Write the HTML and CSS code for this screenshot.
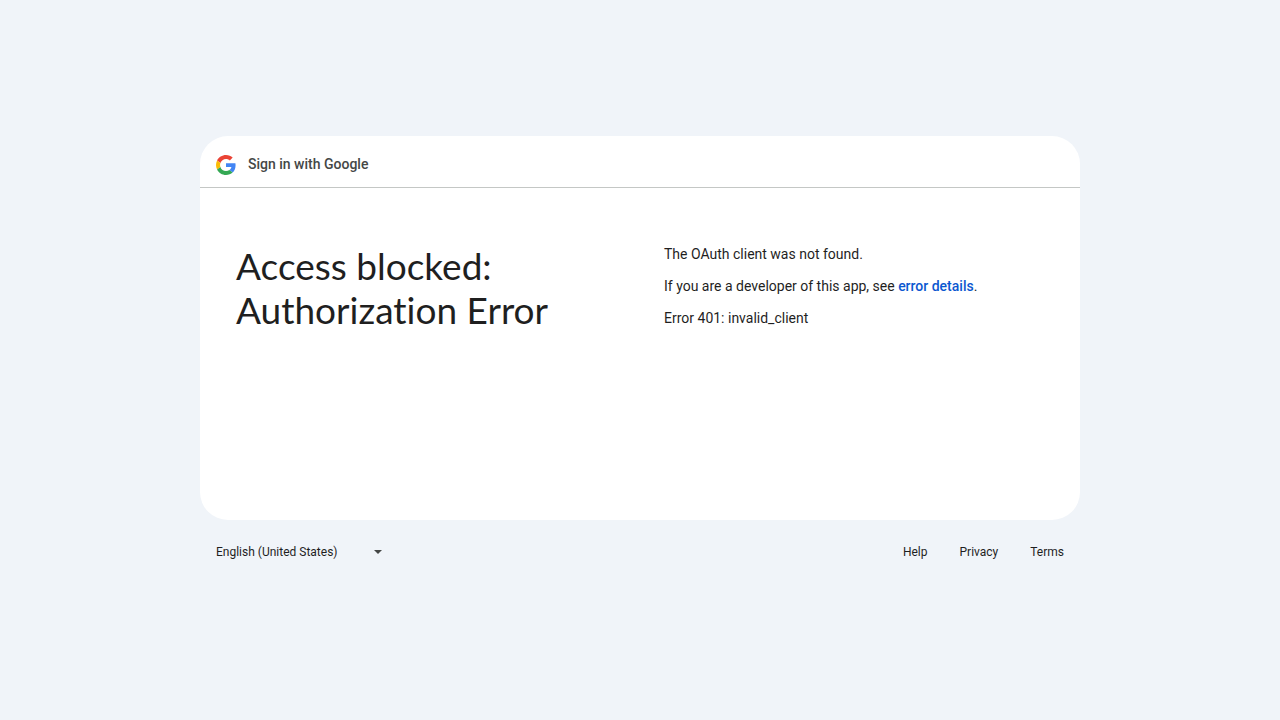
FILE: index.html
```html
<!DOCTYPE html>
<html lang="en">
<head>
<meta charset="utf-8">
<meta name="viewport" content="width=device-width, initial-scale=1">
<title>Error 401: invalid_client</title>
<link rel="stylesheet" href="styles.css">
</head>
<body class="page">
<div class="shell">
  <main class="card">
    <header class="card-header">
      <svg class="logo" viewBox="0 0 48 48" aria-hidden="true">
        <path fill="#EA4335" d="M24 9.5c3.54 0 6.71 1.22 9.21 3.6l6.85-6.85C35.9 2.38 30.47 0 24 0 14.62 0 6.51 5.38 2.56 13.22l7.98 6.19C12.43 13.72 17.74 9.5 24 9.5z"/>
        <path fill="#4285F4" d="M46.98 24.55c0-1.57-.15-3.09-.38-4.55H24v9.02h12.94c-.58 2.96-2.26 5.48-4.78 7.18l7.73 6c4.51-4.18 7.09-10.36 7.09-17.65z"/>
        <path fill="#FBBC05" d="M10.53 28.59c-.48-1.45-.76-2.99-.76-4.59s.27-3.14.76-4.59l-7.98-6.19C.92 16.46 0 20.12 0 24c0 3.88.92 7.54 2.56 10.78l7.97-6.19z"/>
        <path fill="#34A853" d="M24 48c6.48 0 11.93-2.13 15.89-5.81l-7.73-6c-2.15 1.45-4.92 2.3-8.16 2.3-6.26 0-11.57-4.22-13.47-9.91l-7.98 6.19C6.51 42.62 14.62 48 24 48z"/>
      </svg>
      <span class="brand">Sign in with Google</span>
    </header>
    <div class="content">
      <h1 class="title">Access blocked: Authorization Error</h1>
      <section class="details">
        <p class="text">The OAuth client was not found.</p>
        <p class="text">If you are a developer of this app, see <a class="link" href="#details">error details</a>.</p>
        <p class="text">Error 401: invalid_client</p>
      </section>
    </div>
  </main>
  <footer class="footer">
    <div class="language">
      <select class="language-select" aria-label="Language">
        <option>English (United States)</option>
      </select>
      <svg class="arrow" viewBox="0 0 8 4" aria-hidden="true"><path fill="#444746" d="M0 0h8L4 4z"/></svg>
    </div>
    <nav class="footer-links">
      <a class="footer-link" href="#help">Help</a>
      <a class="footer-link" href="#privacy">Privacy</a>
      <a class="footer-link" href="#terms">Terms</a>
    </nav>
  </footer>
</div>
</body>
</html>
```
FILE: styles.css
```css
* { box-sizing: border-box; }
.page {
  margin: 0;
  min-height: 100vh;
  display: flex;
  align-items: center;
  justify-content: center;
  background: #f0f4f9;
  color: #1f1f1f;
  font-family: "Google Sans", Roboto, sans-serif;
  font-size: 14px;
  line-height: 20px;
}
.shell { width: 100%; max-width: 880px; }
.card {
  min-height: 384px;
  background: #fff;
  border-radius: 28px;
}
.card-header {
  display: flex;
  align-items: flex-end;
  gap: 12px;
  padding: 17px 16px 12px;
  border-bottom: 1px solid #c4c7c5;
}
.logo { width: 20px; height: 20px; }
.brand {
  color: #444746;
  font-size: 14px;
  font-weight: 500;
  line-height: 22px;
}
.content {
  display: grid;
  grid-template-columns: 1fr 1fr;
  gap: 48px;
  padding: 56px 36px 36px;
}
.title {
  margin: 0;
  font-family: "Google Sans", Lato, sans-serif;
  font-size: 37px;
  font-weight: 400;
  font-variant-ligatures: none;
  line-height: 44px;
}
.details {
  display: flex;
  flex-direction: column;
  gap: 12px;
}
.text { margin: 0; }
.link {
  color: #0b57d0;
  font-weight: 500;
  text-decoration: none;
}
.footer {
  display: flex;
  align-items: center;
  justify-content: space-between;
  height: 64px;
  padding: 0 16px;
  font-size: 12px;
}
.language {
  display: grid;
  align-items: center;
  width: 166px;
}
.language-select {
  grid-area: 1 / 1;
  appearance: none;
  width: 100%;
  padding: 0;
  border: 0;
  background: transparent;
  color: inherit;
  font: inherit;
}
.arrow {
  grid-area: 1 / 1;
  justify-self: end;
  width: 8px;
  height: 4px;
  pointer-events: none;
}
.footer-links { display: flex; gap: 32px; }
.footer-link { color: inherit; text-decoration: none; }
```
